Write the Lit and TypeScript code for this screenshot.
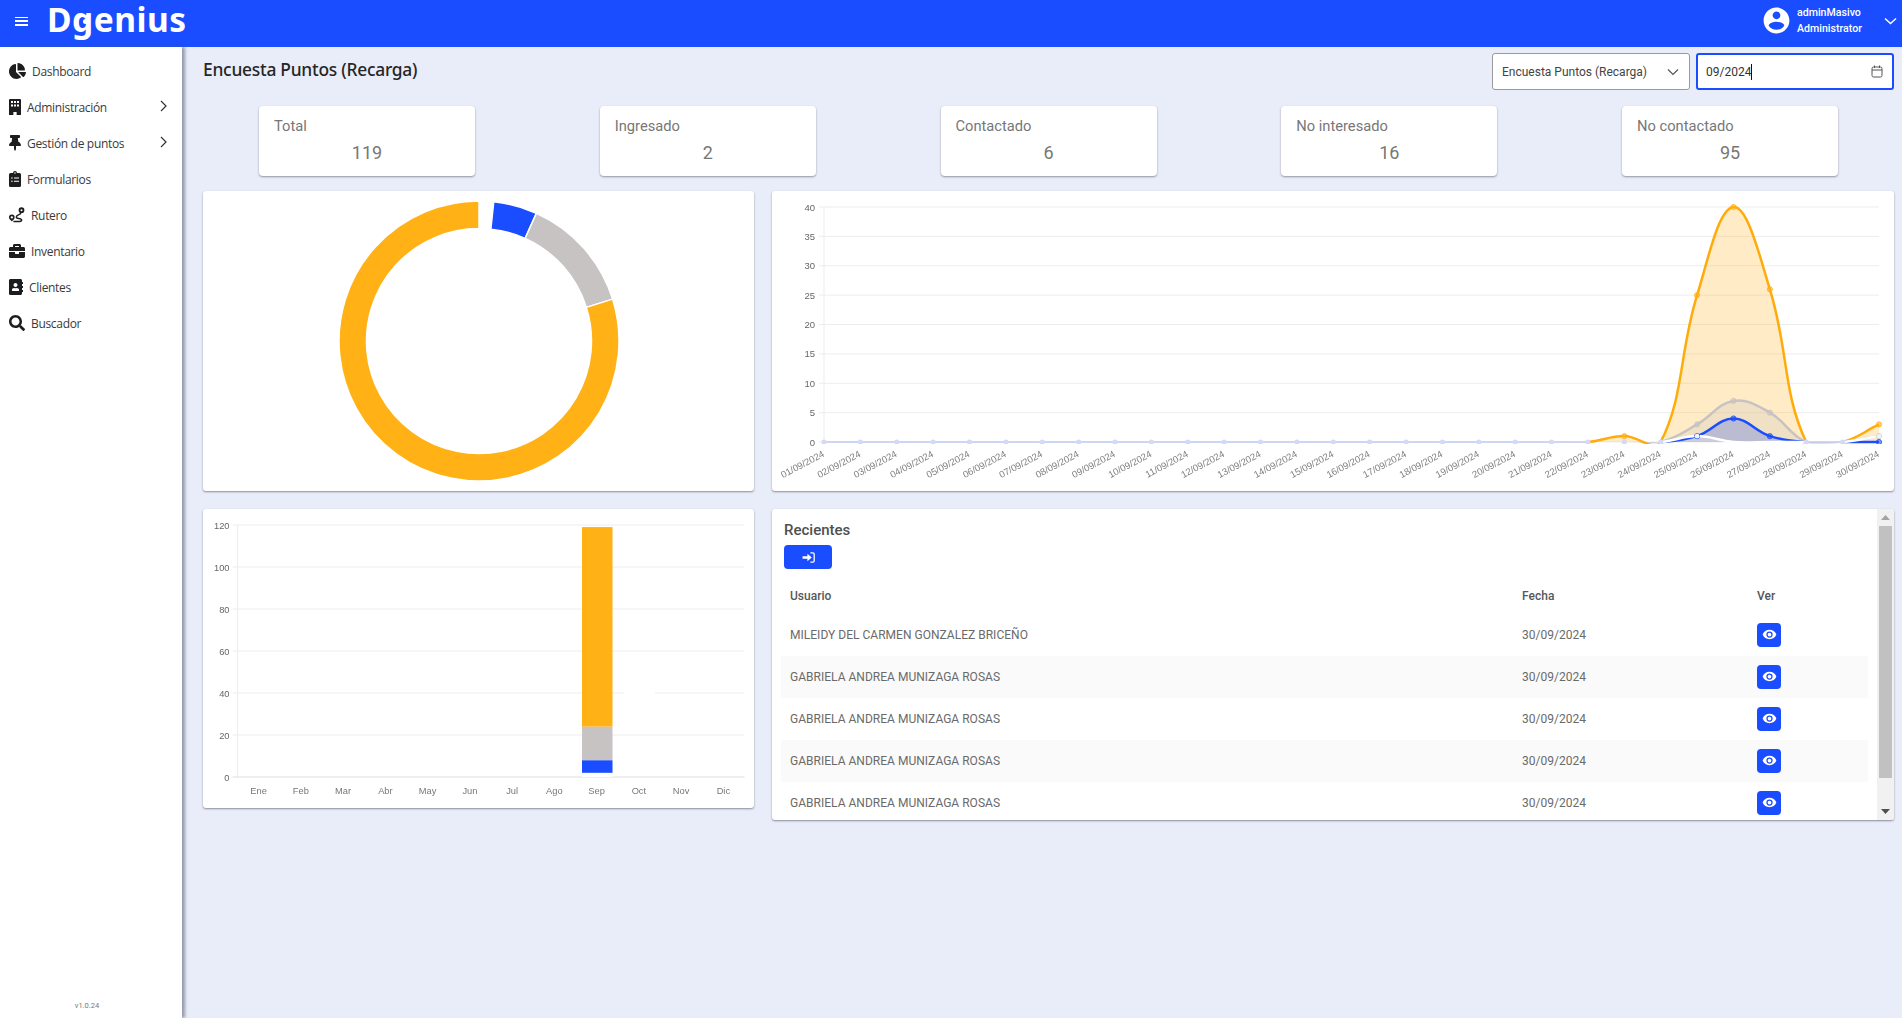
import { LitElement, html, css, svg } from "lit";
import { customElement } from "lit/decorators.js";

const ICONS: Record<string, { vb: string; w: number; body: any }> = {
  pie: { vb: "0 0 544 512", w: 17, body: svg`<path d="M527.79 288H290.5l158.03 158.03c6.04 6.04 15.98 6.53 22.19 .68 38.7-36.46 65.32-85.61 73.13-140.86 1.34-9.46-6.51-17.85-16.06-17.85zm-15.83-64.8C503.72 103.74 408.26 8.28 288.8 .04 279.68-.59 272 7.1 272 16.24V240h223.77c9.14 0 16.82-7.68 16.19-16.8zM224 288V50.71c0-9.55-8.39-17.4-17.84-16.06C86.99 51.49-4.1 155.6 .14 280.37 4.5 408.51 114.83 513.59 243.03 511.98c50.4-.63 96.97-16.87 135.26-44.03 7.9-5.6 8.42-17.23 1.57-24.08L224 288z"/>` },
  building: { vb: "0 0 384 512", w: 12, body: svg`<path fill-rule="evenodd" d="M32 0h320a32 32 0 0 1 32 32v480H244v-96h-104v96H0V32A32 32 0 0 1 32 0zM64 64v64h64V64zm96 0v64h64V64zm96 0v64h64V64zM64 176v64h64v-64zm96 0v64h64v-64zm96 0v64h64v-64z"/>` },
  pin: { vb: "0 0 384 512", w: 12, body: svg`<path d="M298.028 214.267L285.793 96H328c13.255 0 24-10.745 24-24V24c0-13.255-10.745-24-24-24H56C42.745 0 32 10.745 32 24v48c0 13.255 10.745 24 24 24h42.207L85.972 214.267C37.465 236.82 0 277.261 0 328c0 13.255 10.745 24 24 24h136v104.007c0 1.242.289 2.467.845 3.578l24 48c2.941 5.882 11.364 5.893 14.311 0l24-48a8.008 8.008 0 0 0 .845-3.578V352h136c13.255 0 24-10.745 24-24-.001-51.183-37.983-91.42-85.973-113.733z"/>` },
  clip: { vb: "0 0 384 512", w: 12, body: svg`<path fill-rule="evenodd" d="M48 64h80a64 64 0 0 1 128 0h80a48 48 0 0 1 48 48v352a48 48 0 0 1-48 48H48a48 48 0 0 1-48-48V112a48 48 0 0 1 48-48zM192 40a24 24 0 1 0 0 48 24 24 0 0 0 0-48zM70 220a24 24 0 1 0 48 0 24 24 0 0 0-48 0zm0 110a24 24 0 1 0 48 0 24 24 0 0 0-48 0zM160 204v32h160v-32zm0 110v32h160v-32z"/>` },
  route: { vb: "0 0 512 512", w: 16, body: svg`<path fill="none" stroke="currentColor" stroke-width="48" d="M384 190c-30 70-150 60-150 130 0 80 130 20 170 90 10 30-20 50-60 50H140"/><circle cx="90" cy="330" r="64" fill="none" stroke="currentColor" stroke-width="52"/><circle cx="400" cy="100" r="62" fill="none" stroke="currentColor" stroke-width="60"/><path d="M90 465l-60-70h120z"/>` },
  brief: { vb: "0 0 512 512", w: 16, body: svg`<path d="M320 336c0 8.84-7.16 16-16 16h-96c-8.84 0-16-7.16-16-16v-48H0v144c0 25.6 22.4 48 48 48h416c25.6 0 48-22.4 48-48V288H320v48zm144-208h-80V80c0-25.6-22.4-48-48-48H176c-25.6 0-48 22.4-48 48v48H48c-25.6 0-48 22.4-48 48v80h512v-80c0-25.6-22.4-48-48-48zm-144 0H192V96h128v32z"/>` },
  book: { vb: "0 0 448 512", w: 14, body: svg`<path d="M436 160c6.6 0 12-5.4 12-12v-40c0-6.6-5.4-12-12-12h-20V48c0-26.5-21.5-48-48-48H48C21.5 0 0 21.5 0 48v416c0 26.5 21.5 48 48 48h320c26.5 0 48-21.5 48-48v-48h20c6.6 0 12-5.4 12-12v-40c0-6.6-5.4-12-12-12h-20v-64h20c6.6 0 12-5.4 12-12v-40c0-6.6-5.4-12-12-12h-20v-64h20zm-228-32c35.3 0 64 28.7 64 64s-28.7 64-64 64-64-28.7-64-64 28.7-64 64-64zm112 236.8c0 10.6-10 19.2-22.4 19.2H118.4C106 384 96 375.4 96 364.8v-19.2c0-31.8 30.1-57.6 67.2-57.6h5c12.3 5.1 25.7 8 39.8 8s27.6-2.9 39.8-8h5c37.1 0 67.2 25.8 67.2 57.6v19.2z"/>` },
  search: { vb: "0 0 512 512", w: 16, body: svg`<path d="M505 442.7L405.3 343c-4.5-4.5-10.6-7-17-7H372c27.6-35.3 44-79.7 44-128C416 93.1 322.9 0 208 0S0 93.1 0 208s93.1 208 208 208c48.3 0 92.7-16.4 128-44v16.3c0 6.4 2.5 12.5 7 17l99.7 99.7c9.4 9.4 24.6 9.4 33.9 0l28.3-28.3c9.4-9.4 9.4-24.6.1-34zM208 336c-70.7 0-128-57.2-128-128 0-70.7 57.2-128 128-128 70.7 0 128 57.2 128 128 0 70.7-57.2 128-128 128z"/>` },
};

const NAV = [
  { label: "Dashboard", icon: "pie" },
  { label: "Administración", icon: "building", more: true },
  { label: "Gestión de puntos", icon: "pin", more: true },
  { label: "Formularios", icon: "clip" },
  { label: "Rutero", icon: "route" },
  { label: "Inventario", icon: "brief" },
  { label: "Clientes", icon: "book" },
  { label: "Buscador", icon: "search" },
];

const STATS = [
  ["Total", "119"],
  ["Ingresado", "2"],
  ["Contactado", "6"],
  ["No interesado", "16"],
  ["No contactado", "95"],
];

const ROWS = [
  "MILEIDY DEL CARMEN GONZALEZ BRICEÑO",
  "GABRIELA ANDREA MUNIZAGA ROSAS",
  "GABRIELA ANDREA MUNIZAGA ROSAS",
  "GABRIELA ANDREA MUNIZAGA ROSAS",
  "GABRIELA ANDREA MUNIZAGA ROSAS",
];

const ORANGE = "#ffb116";
const GRAY = "#c7c3c3";
const BLUE = "#1a4dff";

// line chart geometry (card-local pixels)
const LX0 = 52, LX1 = 1107, LY0 = 251, LYT = 16;
const lx = (i: number) => LX0 + (i * (LX1 - LX0)) / 29;
const ly = (v: number) => LY0 - (v * (LY0 - LYT)) / 40;

function series(points: Record<number, number>) {
  return Array.from({ length: 30 }, (_, i) => points[i] ?? 0);
}

function spline(values: number[], from = 0, to = 29) {
  const t = 0.4;
  const p = values.map((v, i) => [lx(i), ly(v)]);
  let d = `M${p[from][0].toFixed(1)} ${p[from][1].toFixed(1)}`;
  const ctrl = (i: number) => {
    const a = p[Math.max(i - 1, 0)], b = p[i], c = p[Math.min(i + 1, 29)];
    const d01 = Math.hypot(b[0] - a[0], b[1] - a[1]);
    const d12 = Math.hypot(c[0] - b[0], c[1] - b[1]);
    const sum = d01 + d12 || 1;
    const fa = (t * d01) / sum, fb = (t * d12) / sum;
    return {
      prev: [b[0] - fa * (c[0] - a[0]), b[1] - fa * (c[1] - a[1])],
      next: [b[0] + fb * (c[0] - a[0]), b[1] + fb * (c[1] - a[1])],
    };
  };
  for (let i = from; i < to; i++) {
    const c1 = ctrl(i).next, c2 = ctrl(i + 1).prev, e = p[i + 1];
    d += `C${c1[0].toFixed(1)} ${c1[1].toFixed(1)} ${c2[0].toFixed(1)} ${c2[1].toFixed(1)} ${e[0].toFixed(1)} ${e[1].toFixed(1)}`;
  }
  return d;
}

const LINE_SERIES = [
  { color: ORANGE, data: series({ 22: 1, 24: 25, 25: 40, 26: 26, 29: 3 }) },
  { color: GRAY, data: series({ 24: 3, 25: 7, 26: 5, 29: 1 }) },
  { color: BLUE, data: series({ 24: 1, 25: 4, 26: 1 }) },
  { color: "#ffffff", data: series({ 24: 1, 29: 1 }) },
];

function arcPath(cx: number, cy: number, r0: number, r1: number, a0: number, a1: number) {
  const pt = (r: number, a: number) => [cx + r * Math.cos(a), cy + r * Math.sin(a)].map((n) => n.toFixed(2)).join(" ");
  const large = a1 - a0 > Math.PI ? 1 : 0;
  return `M${pt(r1, a0)}A${r1} ${r1} 0 ${large} 1 ${pt(r1, a1)}L${pt(r0, a1)}A${r0} ${r0} 0 ${large} 0 ${pt(r0, a0)}Z`;
}

@customElement("app-root")
export class AppRoot extends LitElement {
  static styles = css`
    :host { display: flex; flex-direction: column; height: 100vh; overflow: hidden; background: #e9edf9; font-family: Roboto, "Liberation Sans", sans-serif; color: #333; }
    .top { flex: 0 0 47px; background: #1a4dff; display: flex; align-items: center; color: #fff; padding-left: 15px; }
    .burger { width: 13px; height: 9px; display: flex; flex-direction: column; justify-content: space-between; margin-bottom: 5px; }
    .burger i { display: block; height: 1.6px; background: #fff; }
    .logo { position: relative; align-self: flex-start; margin-left: 19px; font: 700 33.5px/38px "Noto Sans", sans-serif; letter-spacing: 0.5px; }
    .logo-dot { position: absolute; left: 36px; top: 19px; width: 5px; height: 5px; border-radius: 50%; background: #fff; }
    .user { margin-left: auto; display: flex; align-items: center; margin-bottom: 6px; }
    .user svg.av { width: 31px; height: 31px; fill: #fff; }
    .names { margin-left: 5px; width: 87px; font: 500 10.6px/16px Roboto, sans-serif; }
    .chev { width: 13px; height: 8px; margin-right: 5px; fill: none; stroke: #fff; stroke-width: 1.5; }
    .body { flex: 1; display: flex; min-height: 0; }
    .side { flex: 0 0 182px; background: #fff; box-shadow: 3px 0 3px rgba(80, 85, 110, 0.55); display: flex; flex-direction: column; padding-top: 6px; position: relative; z-index: 1; }
    .nav { height: 36px; display: flex; align-items: center; padding-left: 9px; gap: 6px; font: 400 12px "Open Sans", sans-serif; letter-spacing: -0.32px; color: #3a3a3a; }
    .nav svg.ic { height: 16px; fill: #1d1d1f; color: #1d1d1f; flex: none; }
    .nav .arrow { margin-left: auto; margin-right: 15px; margin-top: -3px; width: 7px; height: 12px; fill: none; stroke: #333; stroke-width: 1.2; }
    .ver { margin-top: auto; text-align: center; font: 400 7.5px Roboto, sans-serif; color: #777; padding: 0 8px 8px 0; }
    .main { flex: 1; min-width: 0; padding: 6px 8px 0 21px; }
    .head { display: flex; height: 37px; }
    h1 { margin: 4px auto 0 0; font: 500 17.4px/24px "Noto Sans", sans-serif; letter-spacing: -0.25px; color: #262626; }
    .field { width: 198px; box-sizing: border-box; background: #fff; border: 1px solid #9a9a9a; border-radius: 3px; display: flex; align-items: center; padding: 0 10px 0 9px; font-size: 12px; color: #444; }
    .field + .field { margin-left: 6px; border: 2px solid #1a4dff; padding: 0 9px 0 8px; color: #333; }
    .field svg { margin-left: auto; }
    .caret { width: 1px; height: 16px; background: #111; }
    .stats { display: flex; justify-content: space-between; padding: 0 56px; margin-top: 16px; }
    .stat { width: 216px; height: 70px; box-sizing: border-box; background: #fff; border-radius: 4px; box-shadow: 0 1px 2px rgba(60, 60, 70, 0.5); padding: 12px 15px; color: #777; }
    .stat-t { font-size: 14.7px; line-height: 17px; }
    .stat-v { font-size: 18px; line-height: 22px; text-align: center; margin-top: 7px; }
    .grid { display: grid; grid-template-columns: 551px 1122px; column-gap: 18px; row-gap: 18px; margin-top: 15px; align-items: start; }
    .card { background: #fff; border-radius: 3px; box-shadow: 0 1px 2px rgba(60, 60, 70, 0.55); overflow: hidden; }
    .card svg.chart { display: block; filter: blur(0.3px); }
    .h300 { height: 300px; }
    .h299 { height: 299px; }
    .recent { height: 311px; display: flex; }
    .rc { flex: 1; min-width: 0; padding: 11px 9px 0; overflow: hidden; }
    .rc h2 { margin: 0 0 0 3px; font: 500 15px/20px Roboto, sans-serif; color: #505050; }
    .btn { border-radius: 4px; background: #1a4dff; display: flex; align-items: center; justify-content: center; }
    .btn.go { width: 48px; height: 24px; margin: 5px 0 9px 3px; }
    .btn.go svg { width: 13px; height: 13px; }
    .btn.eye { width: 24px; height: 24px; }
    .btn.eye svg { width: 15px; height: 15px; fill: #fff; margin-top: -2px; }
    table { border-collapse: collapse; table-layout: fixed; width: 1087px; font-size: 12px; letter-spacing: 0.02px; color: #6a6a6a; }
    th { height: 36px; text-align: left; font-weight: 500; color: #585858; padding: 0 9px; }
    td { height: 42px; padding: 0 9px; }
    tr.alt td { background: #fafafa; }
    .sb { flex: 0 0 17px; background: #f1f1f1; display: flex; flex-direction: column; align-items: center; }
    .sb-arrow { flex: 0 0 17px; display: flex; align-items: center; justify-content: center; }
    .sb-arrow svg { width: 9px; height: 5px; }
    .thumb { width: 13px; height: 252px; background: #c1c1c1; }
    .sb-gap { flex: 1; }
  `;

  private icon(name: string) {
    const i = ICONS[name];
    return html`<svg class="ic" viewBox=${i.vb} style="width:${i.w}px">${i.body}</svg>`;
  }

  private donut() {
    const seg = [
      [2, "#ffffff"],
      [6, BLUE],
      [16, GRAY],
      [95, ORANGE],
    ] as [number, string][];
    let a = -Math.PI / 2;
    const parts = seg.map(([v, c]) => {
      const a1 = a + (v / 119) * Math.PI * 2;
      const p = svg`<path d=${arcPath(276, 150, 112.5, 140, a, a1)} fill=${c} stroke="#fff" stroke-width="1.5"/>`;
      a = a1;
      return p;
    });
    return html`<svg class="chart" width="551" height="300" viewBox="0 0 551 300">${parts}</svg>`;
  }

  private lineChart() {
    const ticks = [0, 5, 10, 15, 20, 25, 30, 35, 40];
    const label = (i: number) => `${String(i + 1).padStart(2, "0")}/09/2024`;
    return html`<svg class="chart" width="1122" height="300" viewBox="0 0 1122 300" font-family="Liberation Sans, Arial, sans-serif">
      <defs><clipPath id="lc"><rect x="40" y="0" width="1072" height="253"></rect></clipPath></defs>
      <line x1=${LX0} x2=${LX0} y1=${LYT} y2=${LY0} stroke="#ececec"></line>
      ${ticks.map((t) => svg`
        <line x1=${LX0 - 5} x2=${LX1} y1=${ly(t)} y2=${ly(t)} stroke="#ededed"></line>
        <text x=${LX0 - 9} y=${ly(t) + 3.5} text-anchor="end" font-size="9.5" fill="#666">${t}</text>`)}
      ${Array.from({ length: 30 }, (_, i) => svg`
        <text transform="translate(${lx(i) + 1} ${LY0 + 14}) rotate(-28)" text-anchor="end" font-size="9.5" fill="#808080">${label(i)}</text>`)}
      <g clip-path="url(#lc)">
        ${LINE_SERIES.map((s) => {
          const d = spline(s.data);
          return svg`<path d="${d}L${LX1} ${LY0}L${LX0} ${LY0}Z" fill=${s.color} fill-opacity="0.25"></path>`;
        })}
        ${LINE_SERIES.map((s, idx) => {
          const segs: [number, number][] = idx === 0 ? [[21, 23], [23, 27], [28, 29]] : [[23, 27], [28, 29]];
          return segs.map(([a, b]) => svg`<path d=${spline(s.data, a, b)} fill="none" stroke=${idx === 0 ? "#ffab0a" : s.color} stroke-width="2.5"></path>`);
        })}
        <path d="M${LX0} ${LY0}H${lx(21)}M${lx(27)} ${LY0}H${lx(28)}" stroke="#c3caf2" stroke-width="1.3" fill="none"></path>
        ${Array.from({ length: 30 }, (_, i) => {
          const hot = i >= 24 && i <= 26;
          return hot || i === 29 ? null : svg`<circle cx=${lx(i)} cy=${LY0} r="2.6" fill="#d3d9f7"></circle>`;
        })}
        ${LINE_SERIES.map((s, idx) =>
          [22, 24, 25, 26, 29].map((i) => {
            if (s.data[i] === 0 && !(idx === 2 && i === 29)) return null;
            if (idx === 3) return svg`<circle cx=${lx(i)} cy=${ly(s.data[i])} r="2.4" fill="#eef0fb"></circle>`;
            return svg`<circle cx=${lx(i)} cy=${ly(s.data[i])} r="2.6" fill=${s.color} fill-opacity="0.55" stroke=${s.color} stroke-width="0.8"></circle>`;
          })
        )}
      </g>
    </svg>`;
  }

  private barChart() {
    const X0 = 34.5, X1 = 541.5, Y0 = 268, YT = 16;
    const y = (v: number) => Y0 - (v * (Y0 - YT)) / 120;
    const months = ["Ene", "Feb", "Mar", "Abr", "May", "Jun", "Jul", "Ago", "Sep", "Oct", "Nov", "Dic"];
    const cw = (X1 - X0) / 12;
    const stack: [number, number, string][] = [
      [0, 2, "#ffffff"],
      [2, 8, BLUE],
      [8, 24, GRAY],
      [24, 119, ORANGE],
    ];
    return html`<svg class="chart" width="551" height="299" viewBox="0 0 551 299" font-family="Liberation Sans, Arial, sans-serif">
      <line x1=${X0} x2=${X0} y1=${YT} y2=${Y0} stroke="#ececec"></line>
      ${[0, 20, 40, 60, 80, 100, 120].map((t) => svg`
        <line x1=${X0 - 5} x2=${X1} y1=${y(t)} y2=${y(t)} stroke=${t === 0 ? "#dedede" : "#ededed"}></line>
        <text x=${X0 - 8} y=${y(t) + 3.5} text-anchor="end" font-size="9.3" fill="#666">${t}</text>`)}
      <rect x="421" y=${y(45)} width="31" height="50" fill="#fff"></rect>
      ${months.map((m, i) => svg`<text x=${X0 + cw * (i + 0.5)} y="285" text-anchor="middle" font-size="9.3" fill="#777">${m}</text>`)}
      ${stack.map(([a, b, c]) => svg`<rect x="379" y=${y(b)} width="30.5" height=${y(a) - y(b)} fill=${c}></rect>`)}
    </svg>`;
  }

  render() {
    return html`
      <div class="top">
        <div class="burger"><i></i><i></i><i></i></div>
        <div class="logo">Dgenius<span class="logo-dot"></span></div>
        <div class="user">
          <svg class="av" viewBox="0 0 24 24"><path d="M12 2C6.48 2 2 6.48 2 12s4.48 10 10 10 10-4.48 10-10S17.52 2 12 2zm0 3c1.66 0 3 1.34 3 3s-1.34 3-3 3-3-1.34-3-3 1.34-3 3-3zm0 14.2c-2.5 0-4.71-1.28-6-3.22.03-1.99 4-3.08 6-3.08 1.99 0 5.97 1.09 6 3.08-1.29 1.94-3.5 3.22-6 3.22z"></path></svg>
          <div class="names">adminMasivo<br />Administrator</div>
          <svg class="chev" viewBox="0 0 13 8"><path d="M1 1.5l5.5 5 5.5-5"></path></svg>
        </div>
      </div>
      <div class="body">
        <aside class="side">
          ${NAV.map((n) => html`<div class="nav">${this.icon(n.icon)}<span>${n.label}</span>${n.more ? html`<svg class="arrow" viewBox="0 0 7 12"><path d="M1 1l5 5-5 5"></path></svg>` : ""}</div>`)}
          <div class="ver">v1.0.24</div>
        </aside>
        <main class="main">
          <div class="head">
            <h1>Encuesta Puntos (Recarga)</h1>
            <div class="field">Encuesta Puntos (Recarga)
              <svg width="12" height="8" viewBox="0 0 12 8" fill="none" stroke="#555" stroke-width="1.2"><path d="M1 1.5l5 5 5-5"></path></svg>
            </div>
            <div class="field">09/2024<span class="caret"></span>
              <svg width="12" height="13" viewBox="0 0 12 13" fill="none" stroke="#555" stroke-width="1"><rect x="1" y="2" width="10" height="10" rx="1.5"></rect><path d="M1 5h10M3.5 .5v2.5M8.5 .5v2.5"></path></svg>
            </div>
          </div>
          <div class="stats">
            ${STATS.map(([t, v]) => html`<div class="stat"><div class="stat-t">${t}</div><div class="stat-v">${v}</div></div>`)}
          </div>
          <div class="grid">
            <div class="card h300">${this.donut()}</div>
            <div class="card h300">${this.lineChart()}</div>
            <div class="card h299">${this.barChart()}</div>
            <div class="card recent">
              <div class="rc">
                <h2>Recientes</h2>
                <div class="btn go"><svg viewBox="0 0 24 24" fill="#fff"><path d="M1 9.5h9V5l8 7-8 7v-4.5H1z"></path><path d="M15.5 3.5H20a2.5 2.5 0 0 1 2.5 2.5v12a2.5 2.5 0 0 1-2.5 2.5h-4.5" fill="none" stroke="#fff" stroke-width="2.4"></path></svg></div>
                <table>
                  <colgroup><col style="width:732px" /><col style="width:235px" /><col /></colgroup>
                  <thead><tr><th>Usuario</th><th>Fecha</th><th>Ver</th></tr></thead>
                  <tbody>
                    ${ROWS.map((r, i) => html`<tr class=${i % 2 ? "alt" : ""}><td>${r}</td><td>30/09/2024</td><td><div class="btn eye"><svg viewBox="0 0 24 24"><path d="M12 4.5C7 4.5 2.7 7.6 1 12c1.7 4.4 6 7.5 11 7.5s9.3-3.1 11-7.5c-1.7-4.4-6-7.5-11-7.5zM12 17a5 5 0 1 1 0-10 5 5 0 0 1 0 10zm0-8a3 3 0 1 0 0 6 3 3 0 0 0 0-6z"></path></svg></div></td></tr>`)}
                  </tbody>
                </table>
              </div>
              <div class="sb">
                <div class="sb-arrow"><svg viewBox="0 0 9 5"><path d="M4.5 0L9 5H0z" fill="#a3a3a3"></path></svg></div>
                <div class="thumb"></div>
                <div class="sb-gap"></div>
                <div class="sb-arrow"><svg viewBox="0 0 9 5"><path d="M0 0h9L4.5 5z" fill="#505050"></path></svg></div>
              </div>
            </div>
          </div>
        </main>
      </div>
    `;
  }
}
